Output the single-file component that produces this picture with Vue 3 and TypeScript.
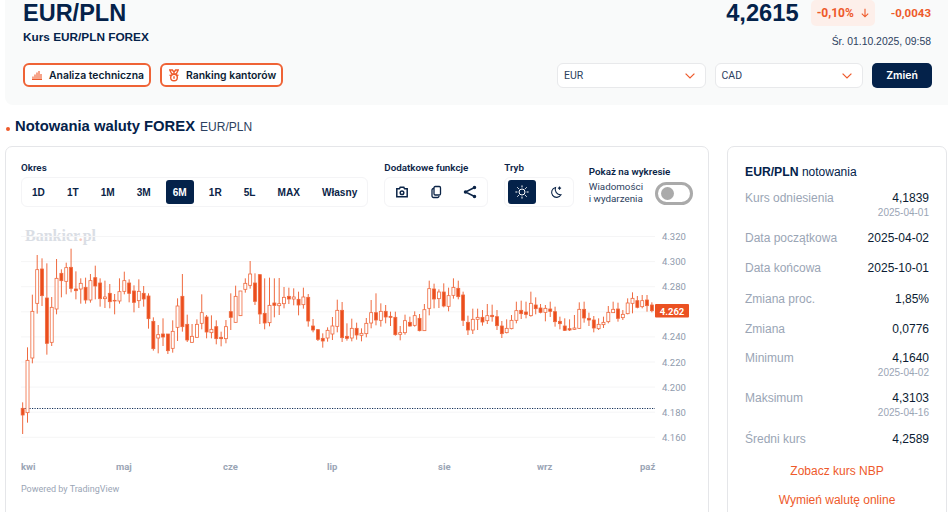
<template>
  <div class="page">
    <header class="top">
      <div class="top-left">
        <h1>EUR/PLN</h1>
        <p class="sub">Kurs EUR/PLN FOREX</p>
        <div class="links">
          <a class="link">
            <svg width="10" height="10" viewBox="0 0 10 10" fill="none" stroke="#ee5a2b" stroke-width="1.100">
              <path d="M0 9.400h10M1 8.500V6.500M3 8.500V4.500M5 8.500V2.500M7 8.500V1M9 8.500V4" />
            </svg>
            Analiza techniczna
          </a>
          <a class="link">
            <svg width="10" height="13" viewBox="0 0 10 13" fill="none" stroke="#ee5a2b" stroke-width="1.400">
              <path d="M.8 1h2.600L5 3.200 6.600 1h2.600L7.200 5H2.800z" />
              <circle cx="5" cy="8.500" r="3.300" />
              <path d="M.6 5.800 2.200 6.800M9.400 5.800 7.800 6.800M5 7.200v2.600" />
            </svg>
            Ranking kantorów
          </a>
        </div>
      </div>
      <div class="top-right">
        <div class="quote">
          <strong class="price">4,2615</strong>
          <span class="badge">
            -0,10%
            <svg width="10" height="10" viewBox="0 0 10 10" fill="none" stroke="#ee5a2b" stroke-width="1.100">
              <path d="M5 .8v8M1.800 5.600 5 8.800l3.200-3.200" />
            </svg>
          </span>
          <span class="change">-0,0043</span>
        </div>
        <div class="date">Śr. 01.10.2025, 09:58</div>
        <div class="pickers">
          <div v-for="code in currencies" :key="code" class="select">
            {{ code }}
            <svg width="10" height="6" viewBox="0 0 10 6" fill="none" stroke="#ee5a2b" stroke-width="1.200">
              <path d="M.6.6 5 5l4.400-4.400" />
            </svg>
          </div>
          <button class="swap">Zmień</button>
        </div>
      </div>
    </header>

    <h2 class="heading"><i class="dot"></i>Notowania waluty FOREX <small>EUR/PLN</small></h2>

    <main class="content">
      <section class="card chart-card">
        <div class="tools">
          <div>
            <div class="tool-label">Okres</div>
            <div class="group">
              <button v-for="r in ranges" :key="r" class="range" :class="{ active: r === '6M' }">{{ r }}</button>
            </div>
          </div>
          <div>
            <div class="tool-label">Dodatkowe funkcje</div>
            <div class="group">
              <button class="icon-btn">
                <svg width="14" height="14" viewBox="0 0 14 14" fill="none" stroke="#0b2447" stroke-width="1.500">
                  <path d="M1.800 3.800h2.600l.8-1.500h3.600l.8 1.500h2.600v8h-10.400z" />
                  <circle cx="7" cy="7.700" r="1.800" />
                </svg>
              </button>
              <button class="icon-btn">
                <svg width="14" height="14" viewBox="0 0 14 14" fill="none" stroke="#0b2447" stroke-width="1.300">
                  <rect x="5" y="1.500" width="6.500" height="8.500" rx="1.200" />
                  <path d="M5 3.500h-.5a1.500 1.500 0 0 0-1.500 1.500v6a1.500 1.500 0 0 0 1.500 1.500h4a1.500 1.500 0 0 0 1.500-1.500" />
                </svg>
              </button>
              <button class="icon-btn">
                <svg width="14" height="14" viewBox="0 0 14 14" fill="#0b2447" stroke="#0b2447" stroke-width="1.500">
                  <path d="M11.500 2.500 2.500 7l9 4.500" fill="none" />
                  <circle cx="11.500" cy="2.500" r="1" />
                  <circle cx="2.500" cy="7" r="1" />
                  <circle cx="11.500" cy="11.500" r="1" />
                </svg>
              </button>
            </div>
          </div>
          <div>
            <div class="tool-label">Tryb</div>
            <div class="group">
              <button class="icon-btn active">
                <svg width="14" height="14" viewBox="0 0 14 14" fill="none" stroke="#fff" stroke-width="1">
                  <circle cx="7" cy="7" r="3" />
                  <path d="M7 .4v2M7 11.600v2M.4 7h2M11.600 7h2M2.300 2.300 3.800 3.800M10.200 10.200l1.500 1.500M2.300 11.700 3.800 10.200M10.200 3.800l1.500-1.500" />
                </svg>
              </button>
              <button class="icon-btn">
                <svg width="14" height="14" viewBox="0 0 14 14" fill="none" stroke="#0b2447" stroke-width="1.100">
                  <path d="M6.500 2.500a5 5 0 1 0 5.500 7.300 5.500 5.500 0 0 1-5.500-7.300z" />
                  <path d="M10.500 1.500v3.200M8.900 3.100h3.200" />
                </svg>
              </button>
            </div>
          </div>
          <div class="events">
            <div class="tool-label">Pokaż na wykresie</div>
            <div class="events-row">
              <span>Wiadomości<br />i wydarzenia</span>
              <span class="toggle"><i></i></span>
            </div>
          </div>
        </div>

        <svg class="chart" width="672" height="276" viewBox="20 226 672 276">
          <text x="25" y="241" class="mark">Bankier<tspan fill="#f6c8b6">.</tspan>pl</text>
          <g v-for="t in ticks" :key="t.label">
            <line x1="21" :x2="655" :y1="t.y" :y2="t.y" stroke="#f5f5f6" />
            <text v-if="t.label !== '4.260'" x="662" :y="t.y + 3.500" class="axis">{{ t.label }}</text>
          </g>
          <line x1="22" x2="655" y1="408.500" y2="408.500" stroke="#14305a" stroke-dasharray="1.200 1.300" />
          <g v-for="c in candles" :key="c.x">
            <line :x1="c.x" :x2="c.x" :y1="c.high" :y2="c.low" stroke="#ef6a3f" />
            <rect
              :x="c.x - 1.500"
              :y="c.top"
              width="3"
              :height="c.bottom - c.top"
              :fill="c.filled ? '#eb4d1c' : '#fff'"
              stroke="#ef6a3f"
              stroke-width="0.800"
            />
          </g>
          <rect x="655" y="304" width="34" height="13.500" rx="1" fill="#eb5122" />
          <text x="672" y="314.500" class="tag">4.262</text>
          <text v-for="m in months" :key="m.label" :x="m.x" y="470" class="month">{{ m.label }}</text>
          <text x="21" y="492" class="powered">Powered by TradingView</text>
        </svg>
      </section>

      <aside class="card stats">
        <h3><b>EUR/PLN</b> <span>notowania</span></h3>
        <div v-for="s in stats" :key="s.label" class="stat" :class="{ dated: s.date }">
          <span class="stat-label">{{ s.label }}</span>
          <span class="stat-value">
            {{ s.value }}
            <small v-if="s.date">{{ s.date }}</small>
          </span>
        </div>
        <a class="more first">Zobacz kurs NBP</a>
        <a class="more">Wymień walutę online</a>
      </aside>
    </main>
  </div>
</template>

<script setup lang="ts">
// high, body top, body bottom, low, filled - in thirds of a pixel below y=240
type Raw = [number, number, number, number, number]

const currencies = ['EUR', 'CAD']
const ranges = ['1D', '1T', '1M', '3M', '6M', '1R', '5L', 'MAX', 'Własny']

const raw: Raw[] = [
  [487, 505, 525, 582, 1], [322, 361, 518, 548, 0], [164, 214, 354, 370, 0], [45, 89, 190, 221, 0],
  [55, 87, 167, 198, 1], [70, 174, 310, 344, 1], [171, 202, 307, 318, 0], [57, 115, 207, 223, 0],
  [88, 100, 122, 172, 1], [68, 83, 124, 163, 0], [26, 82, 145, 157, 1], [94, 147, 152, 178, 1],
  [115, 130, 147, 191, 0], [113, 142, 180, 191, 1], [102, 122, 180, 188, 0], [77, 113, 138, 178, 1],
  [115, 129, 176, 200, 1], [122, 171, 176, 204, 0], [132, 160, 185, 205, 1], [162, 181, 183, 223, 0],
  [115, 155, 183, 191, 0], [95, 122, 154, 163, 0], [118, 129, 160, 187, 1], [136, 153, 187, 217, 1],
  [118, 154, 182, 204, 0], [138, 160, 177, 200, 1], [160, 168, 236, 266, 1], [232, 244, 326, 332, 1],
  [255, 284, 294, 340, 0], [235, 282, 291, 318, 1], [282, 282, 332, 342, 1], [241, 274, 325, 338, 0],
  [175, 198, 262, 303, 0], [102, 169, 260, 275, 1], [224, 253, 300, 306, 1], [252, 289, 307, 308, 0],
  [238, 253, 292, 293, 0], [163, 218, 250, 268, 0], [225, 231, 276, 295, 1], [226, 268, 278, 295, 0],
  [241, 260, 296, 313, 1], [275, 292, 296, 319, 1], [240, 260, 296, 310, 0], [160, 215, 232, 270, 1],
  [137, 169, 247, 248, 0], [153, 153, 227, 228, 0], [115, 130, 148, 158, 0], [63, 102, 136, 146, 0],
  [100, 129, 184, 195, 1], [103, 104, 222, 252, 1], [115, 220, 249, 268, 1], [113, 196, 248, 259, 0],
  [115, 189, 196, 232, 1], [114, 191, 197, 225, 0], [141, 172, 191, 205, 0], [143, 169, 177, 192, 1],
  [145, 171, 177, 196, 0], [155, 178, 195, 226, 1], [143, 171, 194, 206, 0], [162, 172, 243, 260, 1],
  [237, 258, 270, 277, 1], [267, 269, 298, 303, 1], [280, 295, 303, 323, 1], [262, 271, 294, 305, 0],
  [231, 258, 282, 300, 0], [179, 211, 259, 277, 0], [186, 211, 293, 306, 1], [250, 289, 295, 302, 1],
  [236, 265, 294, 304, 0], [248, 265, 285, 299, 1], [265, 280, 286, 304, 0], [234, 250, 281, 292, 0],
  [180, 218, 249, 265, 0], [160, 218, 240, 256, 1], [190, 214, 241, 260, 0], [195, 214, 231, 250, 1],
  [215, 229, 232, 258, 1], [215, 232, 284, 287, 1], [258, 278, 283, 301, 0], [224, 242, 278, 284, 0],
  [230, 247, 258, 260, 1], [214, 227, 256, 260, 0], [222, 235, 272, 274, 1], [192, 209, 272, 273, 0],
  [122, 146, 205, 226, 0], [131, 147, 177, 205, 1], [148, 156, 176, 204, 0], [130, 156, 198, 202, 1],
  [143, 167, 199, 214, 0], [115, 142, 166, 176, 0], [122, 145, 170, 178, 1], [155, 165, 241, 258, 1],
  [227, 247, 270, 285, 1], [206, 238, 270, 282, 0], [206, 232, 238, 270, 0], [210, 232, 246, 257, 1],
  [192, 227, 242, 252, 0], [194, 226, 230, 245, 1], [210, 230, 257, 270, 1], [243, 258, 281, 294, 1],
  [238, 265, 278, 280, 0], [225, 241, 266, 268, 0], [185, 212, 241, 250, 0], [182, 211, 221, 237, 1],
  [185, 216, 223, 235, 1], [155, 190, 227, 230, 0], [172, 195, 206, 223, 1], [192, 204, 217, 220, 1],
  [195, 205, 217, 244, 0], [185, 207, 214, 231, 1], [200, 215, 245, 260, 1], [230, 244, 251, 268, 1],
  [235, 258, 271, 273, 1], [238, 266, 270, 273, 1], [225, 264, 268, 270, 0], [187, 208, 265, 267, 0],
  [185, 208, 234, 248, 1], [218, 235, 240, 258, 1], [228, 240, 264, 277, 1], [235, 253, 266, 270, 0],
  [230, 247, 254, 264, 0], [198, 217, 245, 250, 0], [185, 208, 218, 218, 0], [188, 207, 235, 245, 1],
  [210, 223, 233, 240, 0], [175, 189, 221, 223, 0], [157, 175, 190, 220, 0], [168, 182, 202, 205, 1],
  [165, 182, 200, 205, 0], [165, 180, 197, 215, 1], [187, 195, 212, 217, 1],
]

const candles = raw.map((c, i) => ({
  x: 22.67 + i * 4.84,
  high: 240 + c[0] / 3,
  top: 240 + c[1] / 3,
  bottom: 240 + c[2] / 3,
  low: 240 + c[3] / 3,
  filled: c[4] === 1,
}))

const ticks = ['4.320', '4.300', '4.280', '4.260', '4.240', '4.220', '4.200', '4.180', '4.160'].map((label, i) => ({
  label,
  y: 236.500 + i * 25.100,
}))

const months = [
  { label: 'kwi', x: 21 },
  { label: 'maj', x: 116 },
  { label: 'cze', x: 223 },
  { label: 'lip', x: 327 },
  { label: 'sie', x: 438 },
  { label: 'wrz', x: 537 },
  { label: 'paź', x: 640 },
]

const stats = [
  { label: 'Kurs odniesienia', value: '4,1839', date: '2025-04-01' },
  { label: 'Data początkowa', value: '2025-04-02' },
  { label: 'Data końcowa', value: '2025-10-01' },
  { label: 'Zmiana proc.', value: '1,85%' },
  { label: 'Zmiana', value: '0,0776' },
  { label: 'Minimum', value: '4,1640', date: '2025-04-02' },
  { label: 'Maksimum', value: '4,3103', date: '2025-04-16' },
  { label: 'Średni kurs', value: '4,2589' },
]
</script>

<style>
html,
body {
  margin: 0;
  background: #fff;
  overflow: hidden;
}
</style>

<style scoped>
.page {
  width: 948px;
  height: 512px;
  overflow: hidden;
  color: #04224a;
  font-family: 'Liberation Sans', Arial, sans-serif;
}

.top {
  display: flex;
  justify-content: space-between;
  height: 105px;
  box-sizing: border-box;
  margin-left: 5px;
  padding: 0 16px 0 18px;
  background: #f9fafa;
  border-bottom-left-radius: 8px;
}

h1 {
  margin: 0;
  font-size: 23.500px;
  line-height: 26px;
}

.sub {
  margin: 4px 0 0;
  font-size: 11.800px;
  line-height: 14px;
  font-weight: 700;
}

.links {
  display: flex;
  gap: 9px;
  margin-top: 19px;
}

.link {
  display: flex;
  align-items: center;
  gap: 7px;
  height: 24px;
  box-sizing: border-box;
  padding: 0 5px 0 7px;
  border: 2px solid #ef6336;
  border-radius: 6px;
  background: #fff;
  font: 600 10.400px 'Inter', sans-serif;
  color: #0b1c33;
}

.top-right {
  display: flex;
  flex-direction: column;
  align-items: flex-end;
}

.quote {
  display: flex;
  align-items: center;
  height: 26px;
  padding-right: 1px;
}

.price {
  font-size: 23.700px;
  margin-right: 12px;
}

.badge {
  display: flex;
  align-items: center;
  justify-content: space-between;
  width: 64px;
  height: 26px;
  box-sizing: border-box;
  padding: 0 5px 0 6px;
  border-radius: 5px;
  background: #fdefea;
  color: #ee5a2b;
  font: 700 12px 'Roboto', sans-serif;
}

.change {
  margin-left: 16px;
  color: #ee5a2b;
  font: 700 11.500px 'Roboto', sans-serif;
}

.date {
  margin-top: 9px;
  padding-right: 1px;
  font: 10.400px/13px 'Liberation Sans', sans-serif;
  color: #2c4160;
}

.pickers {
  display: flex;
  margin-top: 15px;
  gap: 9px;
}

.select {
  display: flex;
  align-items: center;
  justify-content: space-between;
  width: 148.500px;
  height: 25px;
  box-sizing: border-box;
  padding: 0 10px 0 6px;
  border: 1px solid #e8e9eb;
  border-radius: 6px;
  background: #fff;
  font: 10.500px 'Roboto', sans-serif;
  color: #2c4160;
}

.swap {
  width: 60px;
  height: 25px;
  border: 0;
  border-radius: 5px;
  background: #04224a;
  color: #fff;
  font: 600 10.500px 'Inter', sans-serif;
}

.heading {
  display: flex;
  align-items: baseline;
  height: 41px;
  margin: 0;
  padding: 12px 0 0 5.500px;
  box-sizing: border-box;
  font-size: 14.800px;
  line-height: 18px;
}

.heading small {
  margin-left: 5px;
  font-size: 12px;
  font-weight: 400;
  color: #2c4160;
}

.dot {
  width: 4px;
  height: 4px;
  margin-right: 5.500px;
  border-radius: 50%;
  background: #ee5a2b;
}

.content {
  display: flex;
  align-items: flex-start;
  gap: 18px;
  margin-left: 5px;
}

.card {
  box-sizing: border-box;
  height: 420px;
  border: 1px solid #e5e6e9;
  border-radius: 7px;
  background: #fff;
}

.chart-card {
  width: 704px;
  padding: 15px 0 0 15px;
}

.tools {
  display: flex;
  gap: 16px;
}

.tool-label {
  height: 15px;
  font: 600 9.800px/12px 'Roboto', sans-serif;
  color: #0b2447;
}

.group {
  display: flex;
  gap: 6px;
  height: 30px;
  box-sizing: border-box;
  padding: 2px 3px;
  border: 1px solid #f4f4f6;
  border-radius: 6px;
}

.range,
.icon-btn {
  display: flex;
  align-items: center;
  justify-content: center;
  height: 24px;
  padding: 0;
  border: 0;
  border-radius: 3px;
  background: none;
  color: #0b2447;
}

.range {
  padding: 0 7px;
  margin-right: 2px;
  font: 700 10.100px 'Liberation Sans', sans-serif;
}

.range:last-child {
  margin-right: 0;
}

.icon-btn {
  width: 28px;
}

.active {
  background: #04224a;
  color: #fff;
}

.events {
  margin: 4px 0 0 -1.500px;
}

.events-row {
  display: flex;
  align-items: center;
  justify-content: space-between;
  width: 104px;
  font: 9.800px/12px 'Roboto', sans-serif;
  color: #2c4160;
}

.toggle {
  display: flex;
  align-items: center;
  width: 38px;
  height: 23px;
  box-sizing: border-box;
  padding-left: 3.500px;
  border: 3px solid #aaa;
  border-radius: 12px;
}

.toggle i {
  width: 13px;
  height: 13px;
  border-radius: 50%;
  background: #aaa;
}

.chart {
  display: block;
  margin: 19px 0 0 -1px;
}

.mark {
  font: 700 16px 'Liberation Serif', serif;
  fill: #dadee5;
}

.axis {
  font: 9.500px 'Roboto', sans-serif;
  fill: #8f9bad;
}

.tag {
  font: 700 9.500px 'Roboto', sans-serif;
  fill: #fff;
  text-anchor: middle;
}

.month {
  font: 700 9.500px 'Roboto', sans-serif;
  fill: #9aa5b5;
}

.powered {
  font: 9px 'Roboto', sans-serif;
  fill: #9aa5b5;
}

.stats {
  width: 220px;
  padding: 16px 17px 0;
}

.stats h3 {
  margin: 0 0 9px;
  font-size: 12.200px;
  line-height: 18px;
  font-weight: 400;
}

.stats h3 span {
  font-size: 12px;
}

.stat {
  display: flex;
  justify-content: space-between;
  height: 30.300px;
  font-size: 12px;
  line-height: 16px;
}

.stat.dated {
  height: 40px;
}

.stat.dated:not(:first-of-type) {
  height: 41.500px;
  margin-top: -1.500px;
}

.stat-label {
  color: #9aa5b5;
}

.stat-value {
  display: flex;
  flex-direction: column;
  align-items: flex-end;
  color: #0b1c33;
}

.stat-value small {
  font-size: 10px;
  line-height: 13px;
  color: #9aa5b5;
}

.more {
  display: block;
  height: 29px;
  font-size: 12px;
  line-height: 16px;
  text-align: center;
  color: #ee5a2b;
}

.more.first {
  margin-top: 1.500px;
}
</style>
